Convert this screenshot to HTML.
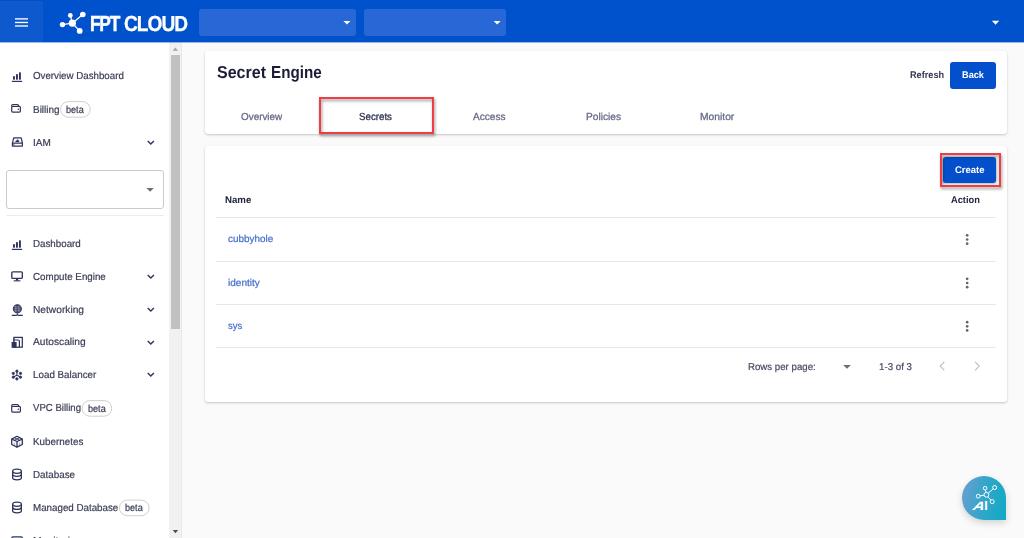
<!DOCTYPE html>
<html><head><meta charset="utf-8"><title>Secret Engine</title>
<style>
*{box-sizing:border-box;margin:0;padding:0}
html,body{width:1024px;height:538px;overflow:hidden}
body{font-family:"Liberation Sans",sans-serif;background:#fafafa;position:relative;color:#1c1f3a}
.x{position:absolute;white-space:nowrap;transform-origin:0 50%;line-height:1;text-rendering:geometricPrecision}
.hdr{position:absolute;left:0;top:0;width:1024px;height:42px;background:#0052cc}
.ham{position:absolute;left:0;top:1px;width:43px;height:41px;background:#0f59cf}
.ham i{position:absolute;left:14.9px;width:13.2px;height:1.4px;background:#fff}
.sel{position:absolute;top:9px;height:27px;background:#2768d6;border-radius:3px}
.car{position:absolute;width:0;height:0;border-style:solid;border-color:#fff transparent transparent transparent;border-width:4px 3.7px 0 3.7px}
.side{position:absolute;left:0;top:42px;width:169.3px;height:496px;background:#fff}
.sb{position:absolute;left:169.3px;top:42px;width:12.3px;height:496px;background:#f1f1f1;border-right:1px solid #e9e9e9}
.sb b{position:absolute;left:1.6px;top:13px;width:9.1px;height:273.7px;background:#c1c1c1}
.pill{position:absolute;border:1px solid #cfcfcf;border-radius:9px;background:#fff}
.ic{position:absolute}
.card{position:absolute;background:#fff;border-radius:3.5px;box-shadow:0 1px 2.5px rgba(0,0,0,.22)}
.hl{position:absolute;border:2px solid #ee3e43;filter:drop-shadow(1.5px 2px 1.6px rgba(0,0,0,.42))}
.btn{position:absolute;background:#0450cc;border-radius:3px}
.row{position:absolute;left:216px;width:780px;height:1px;background:#e7e7e7}
.dots{position:absolute;left:965.8px;width:3px}
.dots i{display:block;width:3px;height:3px;border-radius:50%;background:#555;margin-bottom:1.6px}
</style></head><body>
<div class="hdr"></div>
<div class="ham"></div>
<svg style="position:absolute;left:0;top:0" width="43" height="42" viewBox="0 0 43 42"><g fill="#fff"><rect x="15" y="18.2" width="13" height="1.35"/><rect x="15" y="21.8" width="13" height="1.35"/><rect x="15" y="25.300" width="13" height="1.35"/></g></svg>
<svg style="position:absolute;left:58px;top:10px" width="30" height="26" viewBox="58 10 30 26">
 <g stroke="#fff" stroke-width="1.3" fill="#fff"><path d="M72.3 23.2L62.5 24.6M72.3 23.2L70.3 15.4M72.3 23.2L82.8 14.5M72.3 23.2L79.7 30.9" fill="none"/>
 <circle cx="72.3" cy="23.2" r="3.6" stroke="none"/><circle cx="62.5" cy="24.6" r="2.7" stroke="none"/><circle cx="70.3" cy="15.4" r="2.4" stroke="none"/><circle cx="82.8" cy="14.5" r="2.8" stroke="none"/><circle cx="79.7" cy="30.9" r="2.9" stroke="none"/></g></svg>
<div class="sel" style="left:199px;width:156.6px"></div><svg style="position:absolute;left:341px;top:18px" width="12" height="8" viewBox="341 18 12 8"><path d="M343.40 20.90h7.10l-3.55 3.70z" fill="#fff"/></svg>
<div class="sel" style="left:364px;width:141.8px"></div><svg style="position:absolute;left:491px;top:18px" width="12" height="8" viewBox="491 18 12 8"><path d="M493.60 20.90h7.10l-3.55 3.70z" fill="#fff"/></svg>
<svg style="position:absolute;left:989px;top:18px" width="12" height="8" viewBox="989 18 12 8"><path d="M991.90 20.80h7.30l-3.65 3.90z" fill="#fff"/></svg>
<div class="side"></div>
<div class="sb"><b></b></div>
<svg style="position:absolute;left:169px;top:42px" width="13" height="496" viewBox="169 42 13 496"><path d="M172.7 50.7h5.300l-2.650-3.300z" fill="#a3a3a3"/><path d="M172.700 530h5.500l-2.750 3.200z" fill="#505050"/></svg>
<div style="position:absolute;left:0;top:42px;width:1024px;height:1px;background:rgba(0,82,204,.4)"></div>
<!-- sidebar icons -->
<svg class="ic" style="left:10px;top:70px" width="14" height="14" viewBox="10 70 14 14"><g fill="#30345a"><rect x="13" y="76" width="1.9" height="3.7" rx=".4"/><rect x="16" y="74" width="1.9" height="5.7" rx=".4"/><rect x="19" y="72.3" width="1.9" height="7.4" rx=".4"/><rect x="11.9" y="80.8" width="10.2" height="1.2"/></g></svg>
<svg class="ic" style="left:10px;top:238.3px" width="14" height="14" viewBox="10 70 14 14"><g fill="#30345a"><rect x="13" y="76" width="1.9" height="3.7" rx=".4"/><rect x="16" y="74" width="1.9" height="5.7" rx=".4"/><rect x="19" y="72.3" width="1.9" height="7.4" rx=".4"/><rect x="11.9" y="80.8" width="10.2" height="1.2"/></g></svg>
<svg class="ic" style="left:10px;top:102px" width="14" height="13" viewBox="10 102 14 13"><g fill="none" stroke="#30345a" stroke-width="1.2"><path d="M11.7 106.6V105.6q0-1.1 1.1-1.1h4.6q1.1 0 1.1 1.1v1"/><rect x="11.7" y="106.4" width="8.7" height="5.7" rx="1"/><circle cx="18.3" cy="109.2" r=".75" fill="#30345a" stroke="none"/></g></svg>
<svg class="ic" style="left:10px;top:401.6px" width="14" height="13" viewBox="10 102 14 13"><g fill="none" stroke="#30345a" stroke-width="1.2"><path d="M11.7 106.6V105.6q0-1.1 1.1-1.1h4.6q1.1 0 1.1 1.1v1"/><rect x="11.7" y="106.4" width="8.7" height="5.7" rx="1"/><circle cx="18.3" cy="109.2" r=".75" fill="#30345a" stroke="none"/></g></svg>
<svg class="ic" style="left:10px;top:135px" width="14" height="13" viewBox="10 135 14 13"><g fill="none" stroke="#30345a" stroke-width="1.2" stroke-linejoin="round"><path d="M12.4 143.2L13.7 137.8H21.2L22.4 143.2"/><rect x="12.4" y="143.2" width="10" height="2.9"/><path d="M13.9 143.8v1.8" stroke-width=".9"/><path d="M15.2 141.9q.2-1.5 1.3-1.5q.2-1.1 1.2-.9q.9.2 .9 1.100q.8.3.8 1.300z" fill="#30345a" stroke="none"/></g></svg>
<svg class="ic" style="left:10px;top:270px" width="14" height="13" viewBox="10 270 14 13"><g fill="none" stroke="#30345a" stroke-width="1.35"><rect x="11.8" y="271.8" width="10.5" height="6.6" rx="1"/><path d="M13.7 280.85H20.4" stroke-width="1.1"/><path d="M17.05 278.6v2" stroke-width="2.2"/></g></svg>
<svg class="ic" style="left:10px;top:303px" width="14" height="14" viewBox="10 303 14 14"><g fill="none" stroke="#30345a" stroke-width="1.1"><circle cx="17.35" cy="308.85" r="4" fill="#30345a"/><path d="M11.8 315.4h4.400q1.150 0 1.150-1.900q0 1.900 1.150 1.900h4.300"/><path d="M13.600 308.85h7.500M15.8 305.5v6.700M18.900 305.5v6.700M14 306.900h6.700M14 310.800h6.700" stroke="#fff" stroke-width=".45" opacity=".75"/></g></svg>
<svg class="ic" style="left:10px;top:335px" width="14" height="14" viewBox="10 335 14 14"><g fill="none" stroke="#30345a" stroke-width="1.25"><rect x="13.9" y="337.4" width="8.4" height="9.8"/><path d="M13.400 340h4.700q1.300 0 1.300 1.300v5.900" stroke-width="1.2"/><path d="M13.900 338v4" stroke-width="1" opacity=".6"/><rect x="11.6" y="342" width="5" height="5.8" fill="#30345a" stroke="none"/></g></svg>
<svg class="ic" style="left:10px;top:368px" width="14" height="14" viewBox="10 368 14 14"><g fill="#30345a" stroke="#30345a" stroke-width=".9"><path d="M16.9 371v4.200L13.300 377.100M16.900 375.200L20.500 377.100" fill="none" stroke-width="1.1"/><circle cx="16.9" cy="371.200" r="1.15"/><circle cx="13.300" cy="373.400" r="1.15"/><circle cx="20.500" cy="373.400" r="1.15"/><circle cx="13.300" cy="377.200" r="1.15"/><circle cx="20.500" cy="377.200" r="1.15"/><circle cx="16.900" cy="378.900" r="1.15"/></g></svg>
<svg class="ic" style="left:10px;top:434px" width="14" height="15" viewBox="10 434 14 15"><g fill="none" stroke="#30345a" stroke-width="1.3" stroke-linejoin="round"><path d="M17 436.300L22.300 439.100V444.500L17 447.200L11.700 444.500V439.100z"/><path d="M11.700 439.100L17 441.500L22.300 439.100M17 441.500v5.700"/><path d="M14.300 437.700L19.700 440.300M19.700 437.700L14.300 440.300" stroke-width=".9"/><path d="M14.300 442.500v3M19.700 442.500v3" stroke-width=".7" opacity=".6"/></g></svg>
<svg class="ic" style="left:10px;top:467px" width="14" height="15" viewBox="10 467 14 15"><g fill="none" stroke="#30345a" stroke-width="1.3"><ellipse cx="17" cy="471.300" rx="4.350" ry="2.100"/><path d="M12.650 471.300v6.400c0 1.200 1.950 2.100 4.350 2.100s4.350-.9 4.350-2.100v-6.400"/><path d="M12.650 474.300c0 1.200 1.950 2.100 4.350 2.100s4.350-.9 4.350-2.100"/></g></svg>
<svg class="ic" style="left:10px;top:500.3px" width="14" height="15" viewBox="10 467 14 15"><g fill="none" stroke="#30345a" stroke-width="1.3"><ellipse cx="17" cy="471.300" rx="4.350" ry="2.100"/><path d="M12.650 471.300v6.400c0 1.200 1.950 2.100 4.350 2.100s4.350-.9 4.350-2.100v-6.400"/><path d="M12.650 474.300c0 1.200 1.950 2.100 4.350 2.100s4.350-.9 4.350-2.100"/></g></svg>
<svg class="ic" style="left:10px;top:534.8px" width="14" height="13" viewBox="10 270 14 13"><g fill="none" stroke="#30345a" stroke-width="1.35"><rect x="11.8" y="271.8" width="10.5" height="6.6" rx="1"/><path d="M13.7 280.85H20.4" stroke-width="1.1"/><path d="M17.05 278.6v2" stroke-width="2.2"/></g></svg>
<!-- chevrons -->
<svg class="ic" style="left:146px;top:138px" width="10" height="10" viewBox="0 0 10 10"><path d="M1.7 3l3.1 3.1L7.9 3" fill="none" stroke="#30345a" stroke-width="1.4"/></svg>
<svg class="ic" style="left:146px;top:272.3px" width="10" height="10" viewBox="0 0 10 10"><path d="M1.7 3l3.1 3.1L7.9 3" fill="none" stroke="#30345a" stroke-width="1.4"/></svg>
<svg class="ic" style="left:146px;top:305.1px" width="10" height="10" viewBox="0 0 10 10"><path d="M1.7 3l3.1 3.1L7.9 3" fill="none" stroke="#30345a" stroke-width="1.4"/></svg>
<svg class="ic" style="left:146px;top:337.7px" width="10" height="10" viewBox="0 0 10 10"><path d="M1.7 3l3.1 3.1L7.9 3" fill="none" stroke="#30345a" stroke-width="1.4"/></svg>
<svg class="ic" style="left:146px;top:370.2px" width="10" height="10" viewBox="0 0 10 10"><path d="M1.7 3l3.1 3.1L7.9 3" fill="none" stroke="#30345a" stroke-width="1.4"/></svg>
<!-- beta pills -->
<svg style="position:absolute;left:59px;top:100px" width="34" height="20" viewBox="59 100 34 20"><rect x="60.60" y="101.60" width="29.65" height="15.60" rx="7.80" fill="#fff" stroke="#cfcfcf" stroke-width="1"/></svg>
<svg style="position:absolute;left:80px;top:399px" width="34" height="20" viewBox="80 399 34 20"><rect x="82.10" y="400.60" width="29.65" height="15.60" rx="7.80" fill="#fff" stroke="#cfcfcf" stroke-width="1"/></svg>
<svg style="position:absolute;left:117px;top:498px" width="34" height="20" viewBox="117 498 34 20"><rect x="119.40" y="500.10" width="29.65" height="15.60" rx="7.80" fill="#fff" stroke="#cfcfcf" stroke-width="1"/></svg>
<!-- sidebar select -->
<div style="position:absolute;left:5.5px;top:170.3px;width:158.2px;height:38.4px;border:1px solid #cbcbcb;border-radius:3px"></div>
<svg style="position:absolute;left:144px;top:185px" width="12" height="8" viewBox="144 185 12 8"><path d="M146.40 187.90h7.40l-3.70 3.90z" fill="#6e6e6e"/></svg>
<div style="position:absolute;left:5.5px;top:214.8px;width:158.2px;height:1px;background:#e9ecf1"></div>
<!-- cards -->
<div class="card" style="left:205px;top:51px;width:801.5px;height:83.3px"></div>
<div class="hl" style="left:318.7px;top:97px;width:115.7px;height:36.9px"></div>
<div class="btn" style="left:950px;top:62.3px;width:45.6px;height:26.5px"></div>
<div class="card" style="left:205px;top:146.2px;width:801.5px;height:255.6px"></div>
<div class="btn" style="left:943.4px;top:156.7px;width:52.7px;height:26.3px;box-shadow:0 .5px 2.5px .5px rgba(0,0,0,.3)"></div>
<div class="hl" style="left:939.7px;top:153px;width:61px;height:33.5px"></div>
<div class="row" style="top:217px"></div><div class="row" style="top:261px"></div><div class="row" style="top:304px"></div><div class="row" style="top:347px"></div>
<svg style="position:absolute;left:964px;top:230px" width="6" height="104" viewBox="964 230 6 104"><g fill="#666"><circle cx="967.15" cy="235.35" r="1.35"/><circle cx="967.15" cy="239.50" r="1.35"/><circle cx="967.15" cy="243.65" r="1.35"/><circle cx="967.15" cy="278.85" r="1.35"/><circle cx="967.15" cy="283.00" r="1.35"/><circle cx="967.15" cy="287.15" r="1.35"/><circle cx="967.15" cy="322.15" r="1.35"/><circle cx="967.15" cy="326.30" r="1.35"/><circle cx="967.15" cy="330.45" r="1.35"/></g></svg>
<svg style="position:absolute;left:841px;top:362px" width="12" height="8" viewBox="841 362 12 8"><path d="M843.20 364.90h7.70l-3.85 3.80z" fill="#6e6e6e"/></svg>
<svg style="position:absolute;left:937.4px;top:361.2px" width="10" height="10" viewBox="0 0 10 10"><path d="M7.3 0.8L3.2 5.1l4.1 4.3" fill="none" stroke="#bdbdbd" stroke-width="1.1"/></svg>
<svg style="position:absolute;left:972.3px;top:361.2px" width="10" height="10" viewBox="0 0 10 10"><path d="M3.1 0.8L7.2 5.1 3.1 9.4" fill="none" stroke="#bdbdbd" stroke-width="1.1"/></svg>
<!-- AI bubble -->
<div style="position:absolute;left:962px;top:475.7px;width:44.2px;height:44.1px;border-radius:22.1px 22.1px 0 22.1px;background:linear-gradient(100deg,#6a9fd2 0%,#2fa6c9 55%,#0faac5 100%);box-shadow:0 3px 7px rgba(0,0,0,.16)"></div>
<svg style="position:absolute;left:962px;top:476px" width="44" height="44" viewBox="0 0 44 44"><g fill="none" stroke="#fff" stroke-width="1"><circle cx="24.4" cy="18.8" r="2.4"/><circle cx="16.2" cy="20.2" r="1.9"/><circle cx="23.1" cy="12.2" r="1.8"/><circle cx="32.7" cy="11.5" r="2"/><circle cx="30.2" cy="25.7" r="2"/><path d="M18.1 19.900l3.900-.700M23.400 14l.600 2.400M26.200 17.200l5-4.300M25.800 20.800l3.100 3.300"/></g>
<text transform="translate(9.6 33.800) skewX(-26) scale(1.36 1)" font-family="Liberation Sans, sans-serif" font-weight="bold" font-size="12" fill="#fff">A</text>
<text transform="translate(22.3 33.800) scale(1.05 1)" font-family="Liberation Sans, sans-serif" font-weight="bold" font-size="12" fill="#fff">I</text></svg>

<div class="x" id="s1" style="left:32.60px;top:72.00px;font-size:10.2px;font-weight:normal;color:#3a3d56;letter-spacing:0px;-webkit-text-stroke:.2px #3a3d56;transform:scaleX(0.9545)">Overview Dashboard</div>
<div class="x" id="s2" style="left:32.60px;top:106.00px;font-size:10.2px;font-weight:normal;color:#3a3d56;letter-spacing:0px;-webkit-text-stroke:.2px #3a3d56;transform:scaleX(0.9784)">Billing</div>
<div class="x" id="s3" style="left:32.60px;top:139.00px;font-size:10.2px;font-weight:normal;color:#3a3d56;letter-spacing:0px;-webkit-text-stroke:.2px #3a3d56;transform:scaleX(0.9821)">IAM</div>
<div class="x" id="s4" style="left:32.60px;top:240.00px;font-size:10.2px;font-weight:normal;color:#3a3d56;letter-spacing:0px;-webkit-text-stroke:.2px #3a3d56;transform:scaleX(0.9590)">Dashboard</div>
<div class="x" id="s5" style="left:32.60px;top:273.00px;font-size:10.2px;font-weight:normal;color:#3a3d56;letter-spacing:0px;-webkit-text-stroke:.2px #3a3d56;transform:scaleX(0.9593)">Compute Engine</div>
<div class="x" id="s6" style="left:32.60px;top:306.00px;font-size:10.2px;font-weight:normal;color:#3a3d56;letter-spacing:0px;-webkit-text-stroke:.2px #3a3d56;transform:scaleX(1.0006)">Networking</div>
<div class="x" id="s7" style="left:32.60px;top:338.00px;font-size:10.2px;font-weight:normal;color:#3a3d56;letter-spacing:0px;-webkit-text-stroke:.2px #3a3d56;transform:scaleX(1.0005)">Autoscaling</div>
<div class="x" id="s8" style="left:32.60px;top:371.00px;font-size:10.2px;font-weight:normal;color:#3a3d56;letter-spacing:0px;-webkit-text-stroke:.2px #3a3d56;transform:scaleX(0.9634)">Load Balancer</div>
<div class="x" id="s9" style="left:32.60px;top:404.00px;font-size:10.2px;font-weight:normal;color:#3a3d56;letter-spacing:0px;-webkit-text-stroke:.2px #3a3d56;transform:scaleX(0.9418)">VPC Billing</div>
<div class="x" id="s10" style="left:32.60px;top:438.00px;font-size:10.2px;font-weight:normal;color:#3a3d56;letter-spacing:0px;-webkit-text-stroke:.2px #3a3d56;transform:scaleX(0.9672)">Kubernetes</div>
<div class="x" id="s11" style="left:32.80px;top:471.00px;font-size:10.2px;font-weight:normal;color:#3a3d56;letter-spacing:0px;-webkit-text-stroke:.2px #3a3d56;transform:scaleX(0.9628)">Database</div>
<div class="x" id="s12" style="left:32.80px;top:504.00px;font-size:10.2px;font-weight:normal;color:#3a3d56;letter-spacing:0px;-webkit-text-stroke:.2px #3a3d56;transform:scaleX(0.9593)">Managed Database</div>
<div class="x" id="s13" style="left:32.80px;top:537.00px;font-size:10.2px;font-weight:normal;color:#3a3d56;letter-spacing:0px;-webkit-text-stroke:.2px #3a3d56;transform:scaleX(1.0236)">Monitoring</div>
<div class="x" id="b1" style="left:66.30px;top:106.00px;font-size:10.2px;font-weight:normal;color:#33364f;letter-spacing:0px;-webkit-text-stroke:.2px #33364f;transform:scaleX(0.8927)">beta</div>
<div class="x" id="b2" style="left:87.80px;top:405.00px;font-size:10.2px;font-weight:normal;color:#33364f;letter-spacing:0px;-webkit-text-stroke:.2px #33364f;transform:scaleX(0.8927)">beta</div>
<div class="x" id="b3" style="left:125.10px;top:504.00px;font-size:10.2px;font-weight:normal;color:#33364f;letter-spacing:0px;-webkit-text-stroke:.2px #33364f;transform:scaleX(0.8927)">beta</div>
<div class="x" id="logo" style="left:89.50px;top:13.00px;font-size:21.8px;font-weight:bold;color:#fff;letter-spacing:-1.5px;-webkit-text-stroke:.45px #fff;transform:scaleX(0.7935)">FPT</div>
<div class="x" id="logo2" style="left:124.00px;top:13.00px;font-size:21.8px;font-weight:bold;color:#fff;letter-spacing:-1.1px;-webkit-text-stroke:.25px #fff;transform:scaleX(0.8778)">CLOUD</div>
<div class="x" id="ttl" style="left:216.90px;top:64.00px;font-size:17.3px;font-weight:bold;color:#1a1c38;letter-spacing:0px;transform:scaleX(0.9273)">Secret</div>
<div class="x" id="ttl2" style="left:271.40px;top:64.00px;font-size:17.3px;font-weight:bold;color:#1a1c38;letter-spacing:0px;transform:scaleX(0.8801)">Engine</div>
<div class="x" id="t1" style="left:241.20px;top:113.00px;font-size:10.2px;font-weight:normal;color:#676b86;letter-spacing:0px;-webkit-text-stroke:.28px #676b86;transform:scaleX(0.9701)">Overview</div>
<div class="x" id="t2" style="left:359.00px;top:113.00px;font-size:10.2px;font-weight:normal;color:#2f3350;letter-spacing:0px;-webkit-text-stroke:.3px #2f3350;transform:scaleX(0.9552)">Secrets</div>
<div class="x" id="t3" style="left:473.10px;top:113.00px;font-size:10.2px;font-weight:normal;color:#676b86;letter-spacing:0px;-webkit-text-stroke:.28px #676b86;transform:scaleX(0.9895)">Access</div>
<div class="x" id="t4" style="left:585.60px;top:113.00px;font-size:10.2px;font-weight:normal;color:#676b86;letter-spacing:0px;-webkit-text-stroke:.28px #676b86;transform:scaleX(0.9969)">Policies</div>
<div class="x" id="t5" style="left:699.70px;top:113.00px;font-size:10.2px;font-weight:normal;color:#676b86;letter-spacing:0px;-webkit-text-stroke:.28px #676b86;transform:scaleX(1.0093)">Monitor</div>
<div class="x" id="rf" style="left:910.20px;top:71.00px;font-size:9.7px;font-weight:bold;color:#34374f;letter-spacing:0px;transform:scaleX(0.9452)">Refresh</div>
<div class="x" id="bk" style="left:961.80px;top:71.00px;font-size:9.7px;font-weight:bold;color:#fff;letter-spacing:0px;transform:scaleX(0.9494)">Back</div>
<div class="x" id="cr" style="left:954.90px;top:166.00px;font-size:9.7px;font-weight:bold;color:#fff;letter-spacing:0px;transform:scaleX(0.9782)">Create</div>
<div class="x" id="nm" style="left:224.90px;top:196.00px;font-size:9.7px;font-weight:bold;color:#22253f;letter-spacing:0px;transform:scaleX(0.9966)">Name</div>
<div class="x" id="ac" style="left:951.20px;top:196.00px;font-size:9.7px;font-weight:bold;color:#22253f;letter-spacing:0px;transform:scaleX(0.9588)">Action</div>
<div class="x" id="l1" style="left:227.80px;top:235.00px;font-size:9.9px;font-weight:normal;color:#446dce;letter-spacing:0px;-webkit-text-stroke:.2px #446dce;transform:scaleX(1.0037)">cubbyhole</div>
<div class="x" id="l2" style="left:228.10px;top:279.00px;font-size:9.9px;font-weight:normal;color:#446dce;letter-spacing:0px;-webkit-text-stroke:.2px #446dce;transform:scaleX(1.0193)">identity</div>
<div class="x" id="l3" style="left:228.10px;top:322.00px;font-size:9.9px;font-weight:normal;color:#446dce;letter-spacing:0px;-webkit-text-stroke:.2px #446dce;transform:scaleX(0.9722)">sys</div>
<div class="x" id="f1" style="left:747.90px;top:363.00px;font-size:9.9px;font-weight:normal;color:#484b62;letter-spacing:0px;-webkit-text-stroke:.2px #484b62;transform:scaleX(0.9787)">Rows per page:</div>
<div class="x" id="f2" style="left:878.70px;top:363.00px;font-size:9.9px;font-weight:normal;color:#484b62;letter-spacing:0px;-webkit-text-stroke:.2px #484b62;transform:scaleX(0.9851)">1-3 of 3</div>
</body></html>
